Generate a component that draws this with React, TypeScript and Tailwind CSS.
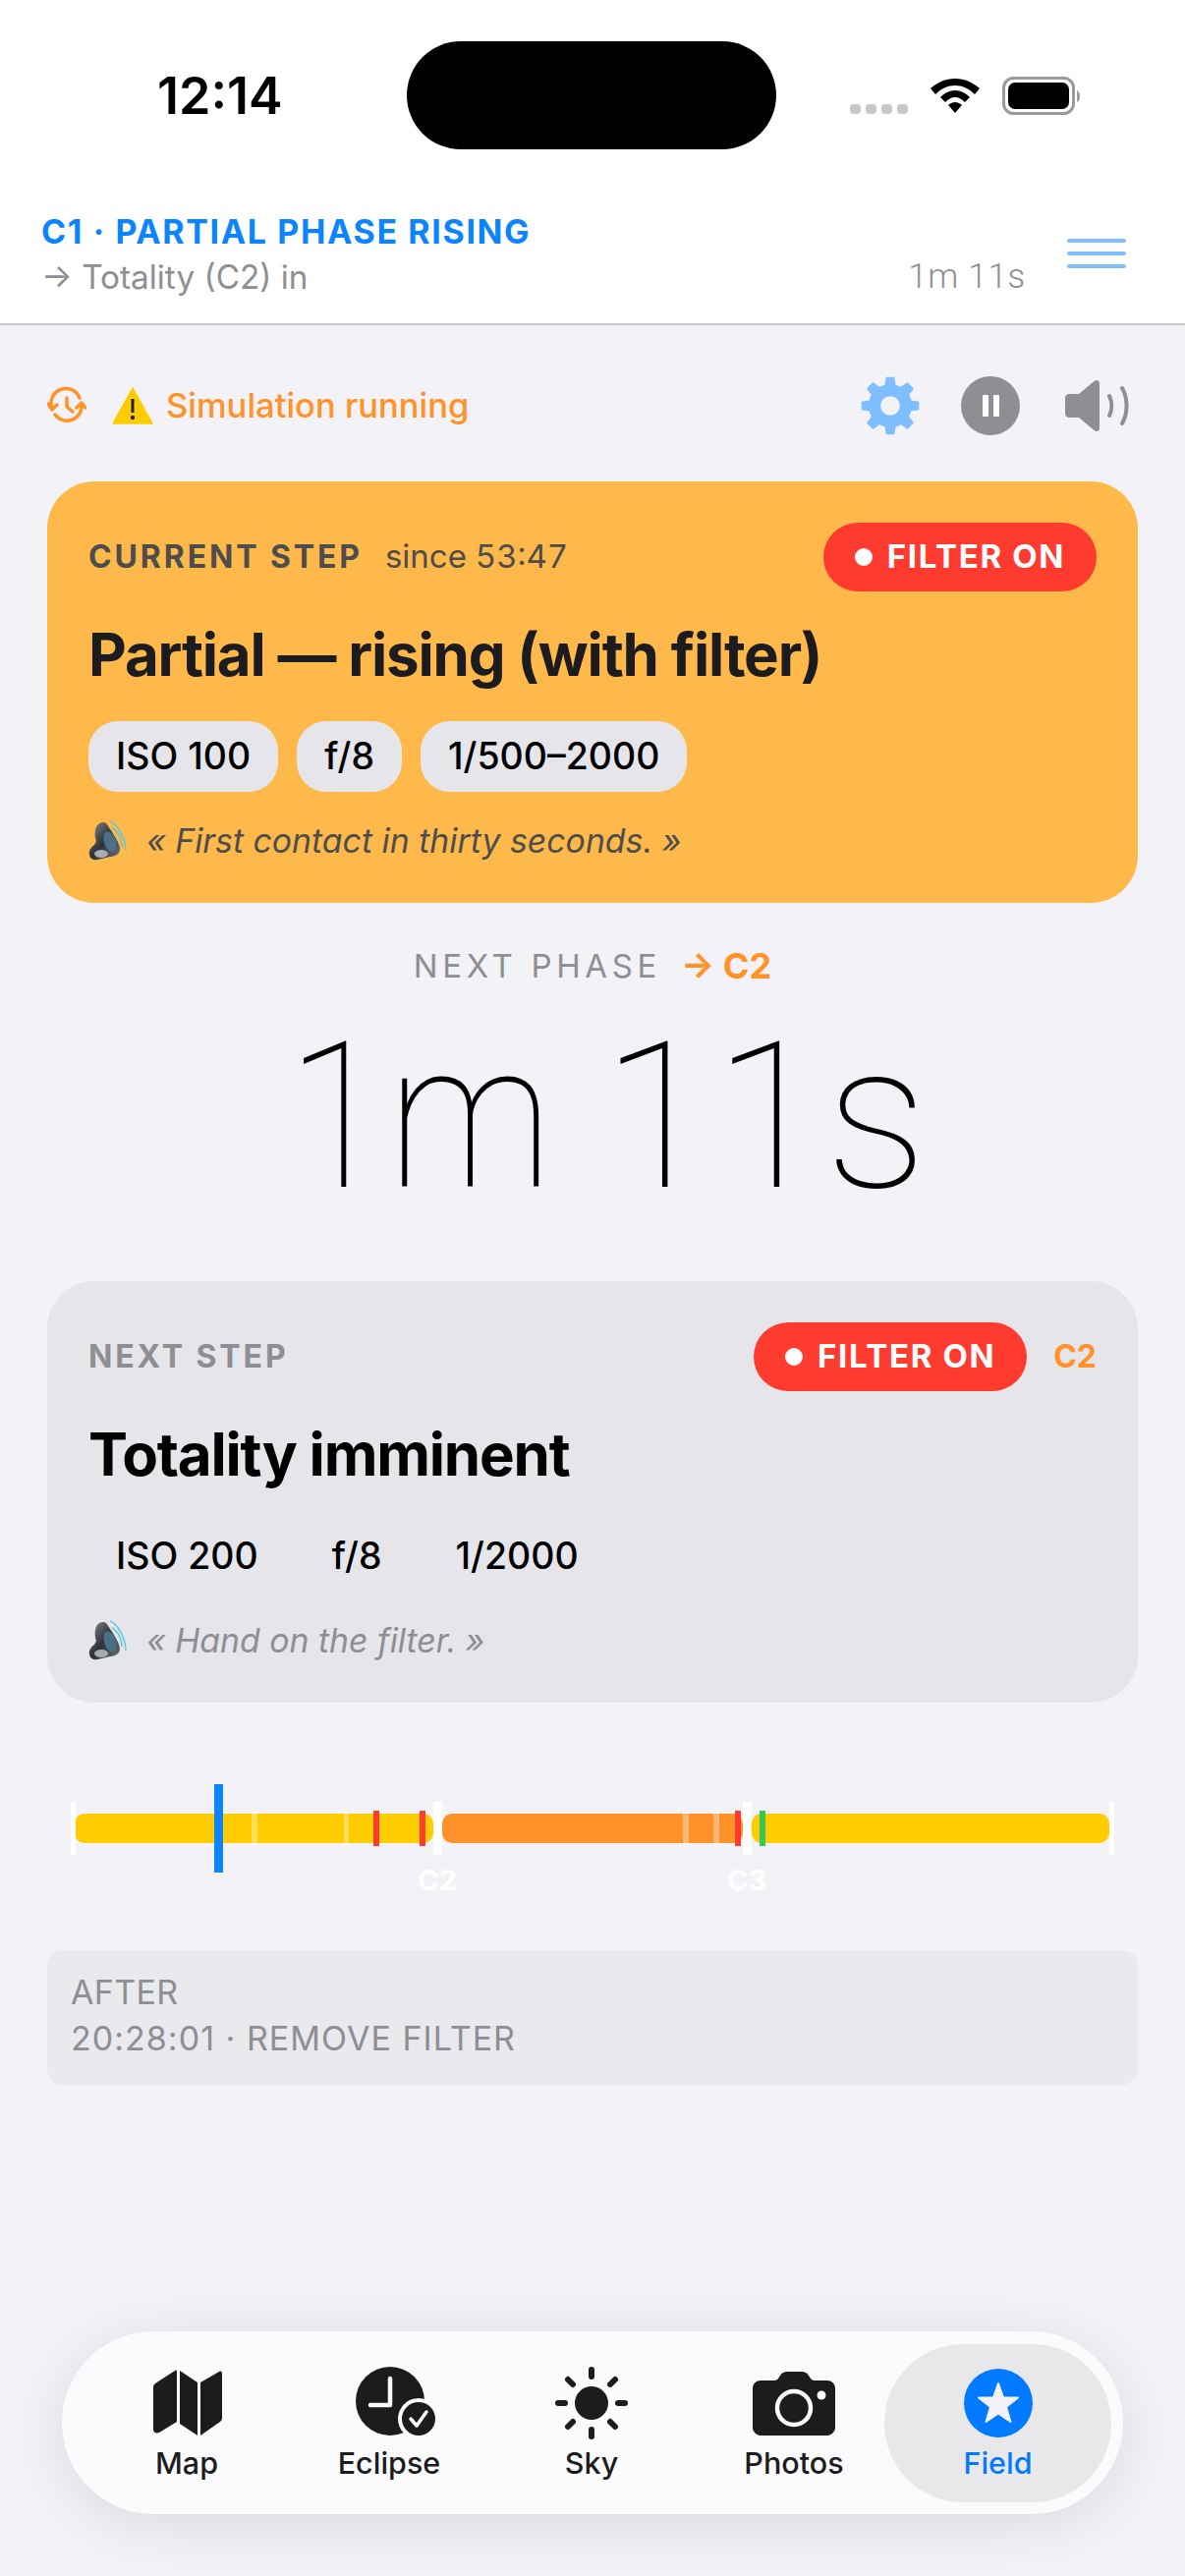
import React from "react";

const font = { fontFamily: "Inter, 'Noto Sans', sans-serif" };

function Speaker() {
  return (
    <svg width="40" height="44" viewBox="0 0 40 44" className="shrink-0">
      <defs>
        <linearGradient id="spk" x1="0" y1="0" x2="1" y2="1">
          <stop offset="0" stopColor="#8a8f96" />
          <stop offset="0.5" stopColor="#2e3136" />
          <stop offset="1" stopColor="#6d7278" />
        </linearGradient>
      </defs>
      <path d="M18 4 C22 10 32 24 32 30 C32 36 26 38 22 38 L14 40 C8 42 2 42 1 36 C0 32 3 28 6 26 L8 22 C6 18 6 8 10 5 C12 3 16 2 18 4Z" fill="url(#spk)" />
      <ellipse cx="22" cy="23" rx="6" ry="11" transform="rotate(-18 22 23)" fill="#4a6f86" />
      <ellipse cx="13" cy="35" rx="7" ry="4" fill="#a7acb2" />
      <path d="M22 2 C30 5 38 20 38 32" fill="none" stroke="#62c7dc" strokeWidth="1.5" />
      <path d="M24 9 C30 12 34 20 34 28" fill="none" stroke="#62c7dc" strokeWidth="1.5" />
    </svg>
  );
}

function FilterPill() {
  return (
    <div className="flex h-[70px] w-[278px] items-center justify-center gap-[15px] rounded-full bg-[#ff3b30] text-[33px] font-bold tracking-[0.05em] text-white">
      <span className="h-[18px] w-[18px] rounded-full bg-white" />
      <span>FILTER ON</span>
    </div>
  );
}

function Chip({ children, bg }: { children: React.ReactNode; bg: boolean }) {
  return (
    <div className={`flex h-[72px] items-center rounded-[30px] px-[28px] text-[37.5px] font-medium text-black ${bg ? "bg-[#e5e5ea]" : ""}`}>
      {children}
    </div>
  );
}

const ticks = [
  { x: 72, w: 5, top: 18, h: 54, c: "#ffffff" },
  { x: 256, w: 5.5, top: 27, h: 36, c: "rgba(255,255,255,.35)" },
  { x: 349.5, w: 5.5, top: 27, h: 36, c: "rgba(255,255,255,.35)" },
  { x: 380, w: 6, top: 27, h: 36, c: "#ff3b30" },
  { x: 427, w: 6, top: 27, h: 36, c: "#ff3b30" },
  { x: 441, w: 9, top: 18, h: 54, c: "#ffffff" },
  { x: 695, w: 6, top: 27, h: 36, c: "rgba(255,255,255,.35)" },
  { x: 726, w: 6, top: 27, h: 36, c: "rgba(255,255,255,.35)" },
  { x: 748, w: 6, top: 27, h: 36, c: "#ff3b30" },
  { x: 756, w: 9, top: 18, h: 54, c: "#ffffff" },
  { x: 773, w: 6, top: 27, h: 36, c: "#34c759" },
  { x: 1129, w: 5, top: 18, h: 54, c: "#ffffff" },
  { x: 217.5, w: 9, top: 0, h: 90, c: "#0a84ff" },
];

function Timeline() {
  return (
    <div className="relative mx-[48px] mt-[83px] h-[110px]">
      <div className="absolute left-[28px] top-[30px] flex h-[30px] w-[1053px]">
        <div className="h-full w-[365px] rounded-[10px] bg-[#ffcc00]" />
        <div className="ml-[9px] h-full w-[306px] rounded-[10px] bg-[#ff9228]" />
        <div className="ml-[9px] h-full w-[364px] rounded-[10px] bg-[#ffcc00]" />
      </div>
      {ticks.map((t, i) => (
        <div
          key={i}
          className="absolute"
          style={{ left: t.x - 48, width: t.w, top: t.top, height: t.h, background: t.c }}
        />
      ))}
      <span className="absolute left-[377px] top-[85px] w-[40px] text-center text-[29px] font-bold leading-[26px] text-white">C2</span>
      <span className="absolute left-[692px] top-[85px] w-[40px] text-center text-[29px] font-bold leading-[26px] text-white">C3</span>
    </div>
  );
}

function TabItem({ label, icon, active }: { label: string; icon: React.ReactNode; active?: boolean }) {
  return (
    <div className={`flex h-[161px] flex-col items-center justify-start pt-[24px] ${active ? "-ml-[11px] w-[231px] rounded-[80px] bg-[#e8e8eb] text-[#007aff]" : "w-[206px] text-[#1c1c1e]"}`}>
      <div className="flex h-[72px] items-center justify-center">{icon}</div>
      <span className="mt-[7px] text-[30.5px] font-medium leading-[36px]">{label}</span>
    </div>
  );
}

export default function App() {
  return (
    <div className="flex min-h-[2622px] flex-col bg-[#f2f2f7]" style={font}>
      <header className="h-[331px] shrink-0 border-b-2 border-[#c9c9cc] bg-white">
        <div className="flex h-[194px] items-start">
          <div className="w-[414px] pt-[71px] pl-[160px] text-[52px] font-semibold leading-[54px] text-black">12:14</div>
          <div className="mt-[42px] h-[110px] w-[376px] rounded-[55px] bg-black" />
          <div className="flex items-start pl-[75px] pt-[78px]">
            <div className="mt-[28px] flex gap-[5px]">
              {[0, 1, 2, 3].map((i) => (
                <span key={i} className="h-[10px] w-[11px] rounded-[4px] bg-[#c7c7cc]" />
              ))}
            </div>
            <svg width="52" height="38" viewBox="0 0 52 38" className="ml-[22px]">
              <path d="M26 2C16 2 8 6 1 12L6 18C12 12 19 9 26 9C33 9 40 12 46 18L51 12C44 6 36 2 26 2Z" />
              <path d="M26 14C20 14 15 17 11 21L16 26C19 23 22 21 26 21C30 21 33 23 36 26L41 21C37 17 32 14 26 14Z" />
              <path d="M26 26C24 26 21 27 19 29L26 37L33 29C31 27 28 26 26 26Z" />
            </svg>
            <svg width="80" height="40" viewBox="0 0 80 40" className="ml-[22px]">
              <rect x="1.5" y="1.5" width="71" height="36" rx="10" fill="none" stroke="#9a9a9e" strokeWidth="3" />
              <rect x="6" y="6" width="62" height="27" rx="7" fill="#000" />
              <path d="M76 14C78 15 79 17 79 20C79 23 78 25 76 26Z" fill="#9a9a9e" />
            </svg>
          </div>
        </div>
        <div className="flex justify-between pl-[42px] pr-[60px]">
          <div className="pt-[21px]">
            <div className="text-[34px] font-bold leading-[42px] tracking-[0.048em] text-[#0a84ff]">C1 · PARTIAL PHASE RISING</div>
            <div className="mt-[4px] text-[33.3px] leading-[42px] text-[#8e8e93]">→ Totality (C2) in</div>
          </div>
          <div className="flex items-start">
            <span className="mt-[67px] text-[35px] font-light leading-[42px] tracking-[0.02em] text-[#8e8e93]" style={{ fontFamily: "Roboto, sans-serif" }}>1m 11s</span>
            <div className="ml-[42px] mt-[49px] flex w-[60px] flex-col gap-[9px]">
              <span className="h-[4px] rounded-full bg-[#7fbfff]" />
              <span className="h-[4px] rounded-full bg-[#7fbfff]" />
              <span className="h-[4px] rounded-full bg-[#7fbfff]" />
            </div>
          </div>
        </div>
      </header>

      <div className="flex h-[159px] items-start justify-between pl-[48px] pr-[54px] pt-[46px]">
        <div className="flex h-[72px] items-center">
          <svg width="40" height="40" viewBox="0 0 40 40" fill="none" stroke="#ff9228" strokeWidth="3.5" strokeLinecap="round" strokeLinejoin="round">
            <path d="M5 23A15 15 0 0 1 33 12" />
            <path d="M35 18A15 15 0 0 1 8 29" />
            <path d="M1 18L5 24L10 19" />
            <path d="M30 22L35 17L39 22" />
            <path d="M20 12V21L26 26" />
          </svg>
          <svg width="42" height="38" viewBox="0 0 42 38" className="ml-[26px]">
            <path d="M21 1L41 37H1Z" fill="#ffcc00" stroke="#ffcc00" strokeWidth="1.5" strokeLinejoin="round" />
            <rect x="19.5" y="12" width="3" height="14" fill="#222" />
            <circle cx="21" cy="31" r="2.2" fill="#222" />
          </svg>
          <span className="ml-[13px] text-[34.5px] font-medium text-[#ff9228]">Simulation running</span>
        </div>
        <div className="flex h-[72px] items-center">
          <svg width="64" height="64" viewBox="0 0 24 24" fill="#7fbfff">
            <path d="M13.6 1h-3.2l-.5 3a8 8 0 0 0-2 .8L5.4 3 3 5.4l1.8 2.5a8 8 0 0 0-.8 2L1 10.4v3.2l3 .5a8 8 0 0 0 .8 2L3 18.6 5.4 21l2.5-1.8a8 8 0 0 0 2 .8l.5 3h3.2l.5-3a8 8 0 0 0 2-.8l2.5 1.8 2.4-2.4-1.8-2.5a8 8 0 0 0 .8-2l3-.5v-3.2l-3-.5a8 8 0 0 0-.8-2L21 5.4 18.6 3l-2.5 1.8a8 8 0 0 0-2-.8zM12 8.3a3.7 3.7 0 1 1 0 7.4 3.7 3.7 0 0 1 0-7.4z" fillRule="evenodd" />
          </svg>
          <div className="ml-[40px] flex h-[60px] w-[60px] items-center justify-center gap-[5px] rounded-full bg-[#8e8e93]">
            <span className="h-[22px] w-[6px] rounded-[1px] bg-white" />
            <span className="h-[22px] w-[6px] rounded-[1px] bg-white" />
          </div>
          <svg width="68" height="54" viewBox="0 0 68 54" className="ml-[46px]" fill="#8e8e93">
            <path d="M32 1C33.5 1 35 2 35 4V50C35 52 33.5 53 32 53C31 53 30 52.5 29 51.5L14 39H4C2 39 0 37 0 35V19C0 17 2 15 4 15H14L29 2.5C30 1.5 31 1 32 1Z" />
            <path d="M45 17C48 23 48 31 45 37M58 9C64 19 64 35 58 45" fill="none" stroke="#8e8e93" strokeWidth="4" strokeLinecap="round" />
          </svg>
        </div>
      </div>

      <section className="mx-[48px] h-[429px] rounded-[48px] bg-[#ffb84a] px-[42px] pt-[42px]">
        <div className="flex items-start justify-between">
          <div className="flex h-[70px] items-center">
            <span className="text-[32px] font-bold tracking-[0.09em] text-[#4d4d4d]">CURRENT STEP</span>
            <span className="ml-[23px] text-[33px] tabular-nums text-[#4d4d4d]">since 53:47</span>
          </div>
          <FilterPill />
        </div>
        <h2 className="mt-[29px] text-[60px] font-bold leading-[70px] tracking-[-0.02em] text-[#1c1c1e]">Partial — rising (with filter)</h2>
        <div className="mt-[33px] flex gap-[19px]">
          <Chip bg>ISO 100</Chip>
          <Chip bg>f/8</Chip>
          <Chip bg>1/500–2000</Chip>
        </div>
        <div className="mt-[28px] flex h-[44px] items-center gap-[19px]">
          <Speaker />
          <span className="text-[33.8px] italic text-[#4d4d4d]">« First contact in thirty seconds. »</span>
        </div>
      </section>

      <div className="mt-[46px] flex h-[36px] items-center justify-center text-[33px] leading-[36px] tracking-[0.14em] text-[#8e8e93]">
        <span>NEXT PHASE</span>
        <span className="ml-[20px] text-[36px] font-bold tracking-normal text-[#ff9228]">→ C2</span>
      </div>

      <div className="mt-[20px] h-[232px] text-center text-[208px] font-thin leading-[232px] text-black" style={{ fontFamily: "Roboto, sans-serif" }}>
        <span className="inline-block origin-right scale-x-[0.9]">1m</span> 11s
      </div>

      <section className="mx-[48px] mt-[51px] h-[429px] rounded-[48px] bg-[#e5e5ea] px-[42px] pt-[42px]">
        <div className="flex items-start justify-between">
          <div className="flex h-[70px] items-center">
            <span className="text-[32px] font-bold tracking-[0.09em] text-[#8e8e93]">NEXT STEP</span>
          </div>
          <div className="flex items-center gap-[27px]">
            <FilterPill />
            <span className="text-[32px] font-bold text-[#ff9228]">C2</span>
          </div>
        </div>
        <h2 className="mt-[29px] text-[60px] font-bold leading-[70px] tracking-[-0.02em] text-black">Totality imminent</h2>
        <div className="mt-[33px] flex gap-[19px]">
          <Chip bg={false}>ISO 200</Chip>
          <Chip bg={false}>f/8</Chip>
          <Chip bg={false}>1/2000</Chip>
        </div>
        <div className="mt-[28px] flex h-[44px] items-center gap-[19px]">
          <Speaker />
          <span className="text-[33.8px] italic text-[#8e8e93]">« Hand on the filter. »</span>
        </div>
      </section>

      <Timeline />

      <div className="mx-[48px] mt-[59px] h-[137px] rounded-[16px] bg-[#e9e9ee] px-[24px] pt-[19px] text-[34px] leading-[47px] tracking-[0.01em] text-[#8e8e93]">
        <div>AFTER</div>
        <div className="tracking-[0.03em]">20:28:01 · REMOVE FILTER</div>
      </div>

      <nav className="mx-[63px] mt-[251px] flex h-[186px] items-center justify-end rounded-[93px] bg-[#fbfbfd] pl-[24px] pr-[12px] shadow-[0_10px_60px_rgba(0,0,0,0.1)]">
        <TabItem
          label="Map"
          icon={
            <svg width="72" height="72" viewBox="0 0 72 72" fill="#1c1c1e">
              <path d="M2 20C2 18 3 17 4 16L24 3C25 2 26 3 26 4V55L8 66C5 67 2 66 2 63Z" />
              <path d="M29 3L47 15V69L29 57Z" />
              <path d="M50 15L69 4C71 3 72 4 72 6V51C72 53 71 54 70 55L50 69Z" />
            </svg>
          }
        />
        <TabItem
          label="Eclipse"
          icon={
            <svg width="82" height="74" viewBox="0 0 82 74" fill="#1c1c1e" className="ml-[14px]">
              <circle cx="35" cy="35" r="35" />
              <path d="M35 12V39H15" fill="none" stroke="#fbfbfd" strokeWidth="4.5" strokeLinecap="round" strokeLinejoin="round" />
              <circle cx="64" cy="53" r="21" fill="#fbfbfd" />
              <circle cx="64" cy="53" r="17" />
              <path d="M56 53L62 60L72 46" fill="none" stroke="#fbfbfd" strokeWidth="3.5" strokeLinecap="round" strokeLinejoin="round" />
            </svg>
          }
        />
        <TabItem
          label="Sky"
          icon={
            <svg width="76" height="76" viewBox="0 0 76 76" fill="#1c1c1e" stroke="#1c1c1e">
              <circle cx="38" cy="38" r="17" stroke="none" />
              <g strokeWidth="6" strokeLinecap="round">
                <path d="M38 4V11M38 65V72M4 38H11M65 38H72M14 14L19 19M57 57L62 62M14 62L19 57M57 19L62 14" />
              </g>
            </svg>
          }
        />
        <TabItem
          label="Photos"
          icon={
            <svg width="84" height="66" viewBox="0 0 84 66">
              <path d="M8 10H22C24 10 25 9 26 8L28 5C30 2 32 1 35 1H50C53 1 55 2 57 5L59 8C60 9 61 10 63 10H76C80 10 84 13 84 18V58C84 62 80 66 76 66H8C4 66 0 62 0 58V18C0 13 4 10 8 10Z" fill="#1c1c1e" />
              <circle cx="42" cy="38" r="17" fill="none" stroke="#fbfbfd" strokeWidth="4.5" />
              <circle cx="70" cy="25" r="4.5" fill="#fbfbfd" />
            </svg>
          }
        />
        <TabItem
          label="Field"
          active
          icon={
            <svg width="70" height="70" viewBox="0 0 70 70">
              <circle cx="35" cy="35" r="35" fill="#007aff" />
              <path d="M35 15L40 29.5H55L43 39L47.5 54L35 45.5L22.5 54L27 39L15 29.5H30Z" fill="#f2f2f7" stroke="#f2f2f7" strokeWidth="2" strokeLinejoin="round" />
            </svg>
          }
        />
      </nav>
    </div>
  );
}
